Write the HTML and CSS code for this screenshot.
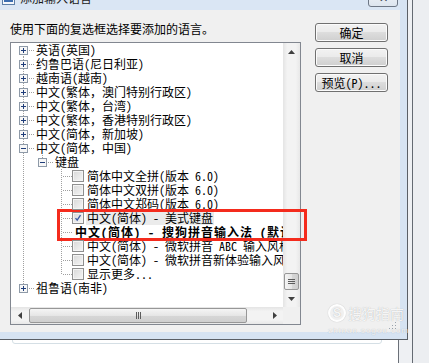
FILE: index.html
```html
<!DOCTYPE html>
<html lang="zh-CN">
<head>
    <meta charset="UTF-8">
    <title>添加输入语言</title>
    <link rel="stylesheet" href="styles.css">
</head>
<body>
    <div class="desktop">
        <!-- window lying behind the dialog -->
        <div class="back-window">
            <div class="back-client">
                <div class="group-box"></div>
            </div>
        </div>

        <!-- the dialog -->
        <div class="dialog">
            <div class="titlebar">
                <svg class="title-icon" viewBox="0 0 13 13">
                    <rect x="0.5" y="0.5" width="12" height="12" fill="#f4f7fb" stroke="#5d7fa8"/>
                    <rect x="2" y="8" width="9" height="2" fill="#3b6db0"/>
                </svg>
                <span class="title-text">添加输入语言</span>
                <div class="close-btn">✕</div>
            </div>

            <div class="client">
                <div class="main-col">
                    <p class="prompt">使用下面的复选框选择要添加的语言。</p>

                    <div class="listbox">
                        <div class="tree">
                            <div class="row"><span class="cell first"><svg class="exp" viewBox="0 0 9 9"><rect x="0.5" y="0.5" width="8" height="8"/><path d="M2 4.5h5M4.5 2v5"/></svg></span><span class="label">英语(英国)</span></div>
                            <div class="row"><span class="cell tee"><svg class="exp" viewBox="0 0 9 9"><rect x="0.5" y="0.5" width="8" height="8"/><path d="M2 4.5h5M4.5 2v5"/></svg></span><span class="label">约鲁巴语(尼日利亚)</span></div>
                            <div class="row"><span class="cell tee"><svg class="exp" viewBox="0 0 9 9"><rect x="0.5" y="0.5" width="8" height="8"/><path d="M2 4.5h5M4.5 2v5"/></svg></span><span class="label">越南语(越南)</span></div>
                            <div class="row"><span class="cell tee"><svg class="exp" viewBox="0 0 9 9"><rect x="0.5" y="0.5" width="8" height="8"/><path d="M2 4.5h5M4.5 2v5"/></svg></span><span class="label">中文(繁体<span class="fw">，</span>澳门特别行政区)</span></div>
                            <div class="row"><span class="cell tee"><svg class="exp" viewBox="0 0 9 9"><rect x="0.5" y="0.5" width="8" height="8"/><path d="M2 4.5h5M4.5 2v5"/></svg></span><span class="label">中文(繁体<span class="fw">，</span>台湾)</span></div>
                            <div class="row"><span class="cell tee"><svg class="exp" viewBox="0 0 9 9"><rect x="0.5" y="0.5" width="8" height="8"/><path d="M2 4.5h5M4.5 2v5"/></svg></span><span class="label">中文(繁体<span class="fw">，</span>香港特别行政区)</span></div>
                            <div class="row"><span class="cell tee"><svg class="exp" viewBox="0 0 9 9"><rect x="0.5" y="0.5" width="8" height="8"/><path d="M2 4.5h5M4.5 2v5"/></svg></span><span class="label">中文(简体<span class="fw">，</span>新加坡)</span></div>
                            <div class="row"><span class="cell tee"><svg class="exp" viewBox="0 0 9 9"><rect x="0.5" y="0.5" width="8" height="8"/><path d="M2 4.5h5"/></svg></span><span class="label">中文(简体<span class="fw">，</span>中国)</span></div>
                            <div class="row"><span class="cell pipe"></span><span class="cell end"><svg class="exp" viewBox="0 0 9 9"><rect x="0.5" y="0.5" width="8" height="8"/><path d="M2 4.5h5"/></svg></span><span class="label">键盘</span></div>
                            <div class="row"><span class="cell pipe"></span><span class="cell"></span><span class="cell tee"></span><span class="check"></span><span class="label">简体中文全拼(版本 6.0)</span></div>
                            <div class="row"><span class="cell pipe"></span><span class="cell"></span><span class="cell tee"></span><span class="check"></span><span class="label">简体中文双拼(版本 6.0)</span></div>
                            <div class="row"><span class="cell pipe"></span><span class="cell"></span><span class="cell tee"></span><span class="check"></span><span class="label">简体中文郑码(版本 6.0)</span></div>
                            <div class="row"><span class="cell pipe"></span><span class="cell"></span><span class="cell tee"></span><span class="check checked"><svg viewBox="0 0 12 12"><path d="M3 6.2l2 2.3 4-6"/></svg></span><span class="label selected">中文(简体) - 美式键盘</span></div>
                            <div class="row"><span class="cell pipe"></span><span class="cell"></span><span class="cell tee"></span><span class="label default">中文(简体) - 搜狗拼音输入法 (默认)</span></div>
                            <div class="row"><span class="cell pipe"></span><span class="cell"></span><span class="cell tee"></span><span class="check"></span><span class="label">中文(简体) - 微软拼音 ABC 输入风格</span></div>
                            <div class="row"><span class="cell pipe"></span><span class="cell"></span><span class="cell tee"></span><span class="check"></span><span class="label">中文(简体) - 微软拼音新体验输入风格</span></div>
                            <div class="row"><span class="cell pipe"></span><span class="cell"></span><span class="cell end"></span><span class="check"></span><span class="label">显示更多...</span></div>
                            <div class="row"><span class="cell end"><svg class="exp" viewBox="0 0 9 9"><rect x="0.5" y="0.5" width="8" height="8"/><path d="M2 4.5h5M4.5 2v5"/></svg></span><span class="label">祖鲁语(南非)</span></div>
                        </div>

                        <!-- vertical scrollbar -->
                        <div class="vscroll">
                            <div class="sb-btn"><svg width="7" height="4" viewBox="0 0 7 4"><path d="M3.5 0L7 4H0z"/></svg></div>
                            <div class="spacer"></div>
                            <div class="thumb v-thumb"><svg width="7" height="5" viewBox="0 0 7 5"><path d="M0 0.5h7M0 2.5h7M0 4.5h7"/></svg></div>
                            <div class="sb-btn"><svg width="7" height="4" viewBox="0 0 7 4"><path d="M0 0h7L3.5 4z"/></svg></div>
                        </div>

                        <!-- horizontal scrollbar -->
                        <div class="hscroll">
                            <div class="sb-btn"><svg width="4" height="7" viewBox="0 0 4 7"><path d="M0 3.5L4 0v7z"/></svg></div>
                            <div class="thumb h-thumb"><svg width="5" height="7" viewBox="0 0 5 7"><path d="M0.5 0v7M2.5 0v7M4.5 0v7"/></svg></div>
                            <div class="spacer"></div>
                            <div class="sb-btn"><svg width="4" height="7" viewBox="0 0 4 7"><path d="M0 0l4 3.5L0 7z"/></svg></div>
                        </div>
                        <div class="corner"></div>
                    </div>
                </div>

                <div class="btn-col">
                    <button class="btn">确定</button>
                    <button class="btn">取消</button>
                    <button class="btn">预览(<u>P</u>)...</button>
                </div>

                <svg class="grip" width="8" height="8" viewBox="0 0 8 8">
                    <rect x="6" y="0" width="1" height="1"/>
                    <rect x="3" y="3" width="1" height="1"/><rect x="6" y="3" width="1" height="1"/>
                    <rect x="0" y="6" width="1" height="1"/><rect x="3" y="6" width="1" height="1"/><rect x="6" y="6" width="1" height="1"/>
                </svg>
            </div>
        </div>

        <!-- red annotation frame -->
        <div class="callout"></div>

        <!-- site watermark -->
        <div class="watermark">
            <div class="wm-top">
                <span class="wm-logo">S</span>
                <span class="wm-name">搜狗指南</span>
            </div>
            <div class="wm-url">zhinan.sogou.com</div>
        </div>
    </div>
</body>
</html>
```

FILE: styles.css
```css
/* Page */
* {
    box-sizing: border-box;
}

body {
    margin: 0;
    background-color: #eceef1;
    font-family: "Noto Sans CJK SC", sans-serif;
    font-size: 12px;
    color: #000;
}

.desktop {
    position: relative;
    width: 429px;
    height: 363px;
    overflow: hidden;
    background-color: #eceef1;
}

/* Window behind the dialog */
.back-window {
    position: absolute;
    left: -10px;
    top: -10px;
    right: 16px;
    bottom: -10px;
    background-color: #eef0f3;
    border-right: 1px solid #646a72;
    padding-right: 13px;
}

.back-client {
    height: 100%;
    background-color: #fff;
    border-right: 1px solid #6b7078;
    padding: 154px 0 0 22px;
}

.group-box {
    width: 370px;
    height: 200px;
    border: 1px solid #d5dfe5;
    border-radius: 3px;
}

/* Dialog frame */
.dialog {
    position: absolute;
    left: 0;
    top: 0;
    width: 408px;
    height: 340px;
    background-color: #d6e3f2;
    border-right: 1px solid #5a5f66;
    border-bottom: 1px solid #5a5f66;
    padding: 0 7px 7px 0;
    display: flex;
    flex-direction: column;
}

.titlebar {
    height: 10px;
    flex: none;
    display: flex;
    align-items: flex-start;
    overflow: hidden;
    background-color: #dae6f4;
}

.title-icon {
    width: 13px;
    height: 13px;
    flex: none;
    margin: -8px 0 0 2px;
}

.title-text {
    margin: -9px 0 0 5px;
    line-height: 14px;
    color: #1b1b1b;
}

.close-btn {
    width: 30px;
    height: 19px;
    margin: -12px 2px 0 auto;
    border: 1px solid #6d7785;
    border-radius: 3px;
    background: linear-gradient(#f3f6fa, #dde5ee);
    display: flex;
    align-items: center;
    justify-content: center;
    font-size: 11px;
    line-height: 1;
    color: #3c4450;
}

/* Dialog body */
.client {
    flex: 1;
    position: relative;
    background-color: #f0f0f0;
    display: flex;
    padding: 12px 0 0 10px;
}

.main-col {
    width: 291px;
    flex: none;
}

.prompt {
    margin: 0;
    line-height: 14px;
    white-space: nowrap;
}

/* Tree list box */
.listbox {
    margin-top: 6px;
    height: 283px;
    border: 1px solid #828790;
    background-color: #fff;
    display: grid;
    grid-template-columns: 1fr 17px;
    grid-template-rows: 1fr 17px;
}

.tree {
    overflow: hidden;
    padding-left: 3px;
    font-feature-settings: "hwid" 1;
}

.tree .fw {
    font-feature-settings: normal;
}

.row {
    height: 14px;
    display: flex;
    align-items: center;
    white-space: nowrap;
}

.cell {
    width: 19px;
    height: 14px;
    flex: none;
    position: relative;
    display: flex;
    align-items: center;
    justify-content: center;
}

.cell::before,
.cell::after {
    content: "";
    position: absolute;
}

.pipe::before,
.tee::before,
.end::before,
.first::before {
    left: 9px;
    width: 1px;
    top: 0;
    bottom: 0;
    background: repeating-linear-gradient(#a0a0a0 0 1px, transparent 1px 2px);
}

.end::before {
    bottom: 7px;
}

.first::before {
    top: 7px;
}

.tee::after,
.end::after,
.first::after {
    left: 10px;
    right: -2px;
    top: 7px;
    height: 1px;
    background: repeating-linear-gradient(to right, transparent 0 1px, #a0a0a0 1px 2px);
}

.exp {
    position: relative;
    z-index: 1;
    width: 9px;
    height: 9px;
}

.exp rect {
    fill: #f7f7f7;
    stroke: #8e9aa8;
}

.exp path {
    stroke: #1f3d7a;
    stroke-width: 1;
}

.check {
    position: relative;
    z-index: 1;
    width: 12px;
    height: 12px;
    margin-left: 1px;
    flex: none;
    border: 1px solid #8f8f8f;
    background: linear-gradient(135deg, #d8d8d8, #f6f6f6);
    box-shadow: inset 0 0 0 1px #f4f4f4;
}

.check svg {
    display: block;
    width: 10px;
    height: 10px;
}

.checked path {
    fill: none;
    stroke: #3b5aa4;
    stroke-width: 1.6;
}

.label {
    margin-left: 3px;
    line-height: 14px;
}

.label.selected {
    background-color: #ebebeb;
    margin-left: 2px;
    padding: 0 1px;
}

.label.default {
    margin-left: 4px;
    font-weight: bold;
    letter-spacing: 1px;
}

/* Scroll bars */
.vscroll {
    display: flex;
    flex-direction: column;
    background: linear-gradient(to right, #e4e4e4, #f3f3f3 25%, #f3f3f3 75%, #e8e8e8);
}

.hscroll {
    display: flex;
    background: linear-gradient(#e4e4e4, #f3f3f3 25%, #f3f3f3 75%, #e8e8e8);
}

.sb-btn {
    flex: none;
    width: 17px;
    height: 17px;
    display: flex;
    align-items: center;
    justify-content: center;
}

.vscroll .sb-btn {
    width: auto;
}

.sb-btn path {
    fill: #404040;
}

.spacer {
    flex: 1;
}

.thumb {
    flex: none;
    border: 1px solid #979797;
    border-radius: 2px;
    display: flex;
    align-items: center;
    justify-content: center;
}

.thumb path {
    stroke: #5c5c5c;
    stroke-width: 1;
}

.v-thumb {
    height: 17px;
    margin: 0 1px;
    background: linear-gradient(to right, #f5f5f5, #e6e6e6 50%, #d7d7d7 50%, #cfcfcf);
}

.h-thumb {
    width: 218px;
    margin: 1px 0 1px 1px;
    background: linear-gradient(#f5f5f5, #e6e6e6 50%, #d7d7d7 50%, #cfcfcf);
}

.corner {
    background-color: #f0f0f0;
}

/* Buttons */
.btn-col {
    margin-left: 14px;
    padding-top: 1px;
    display: flex;
    flex-direction: column;
    gap: 6px;
}

.btn {
    width: 73px;
    height: 19px;
    padding: 0;
    border: 1px solid #707070;
    border-radius: 3px;
    background: linear-gradient(#f2f2f2, #ebebeb 45%, #dddddd 50%, #cfcfcf);
    box-shadow: inset 0 0 0 1px #fbfbfb;
    font: 12px/15px "Noto Sans CJK SC", sans-serif;
    font-feature-settings: "hwid" 1;
    color: #000;
}

.btn u {
    text-decoration: none;
}

.grip {
    position: absolute;
    right: 3px;
    bottom: 2px;
    fill: #9aa3ad;
}

/* Red annotation frame */
.callout {
    position: absolute;
    left: 57px;
    top: 209px;
    width: 250px;
    height: 32px;
    border: 3px solid #f42b1d;
}

/* Watermark */
.watermark {
    position: absolute;
    left: 328px;
    top: 304px;
    color: rgba(255, 255, 255, 0.9);
    text-shadow: 0 0 1px rgba(0, 0, 0, 0.3);
}

.wm-top {
    display: flex;
    align-items: center;
    gap: 2px;
}

.wm-logo {
    width: 18px;
    height: 18px;
    border: 2px solid rgba(255, 255, 255, 0.9);
    border-radius: 50%;
    box-shadow: 0 0 1px rgba(0, 0, 0, 0.3);
    font: bold 12px/14px "Liberation Sans", sans-serif;
    text-align: center;
}

.wm-name {
    font-size: 14px;
    line-height: 18px;
}

.wm-url {
    margin-top: 4px;
    font: 8px/9px "Liberation Sans", sans-serif;
    letter-spacing: 1px;
}
```
